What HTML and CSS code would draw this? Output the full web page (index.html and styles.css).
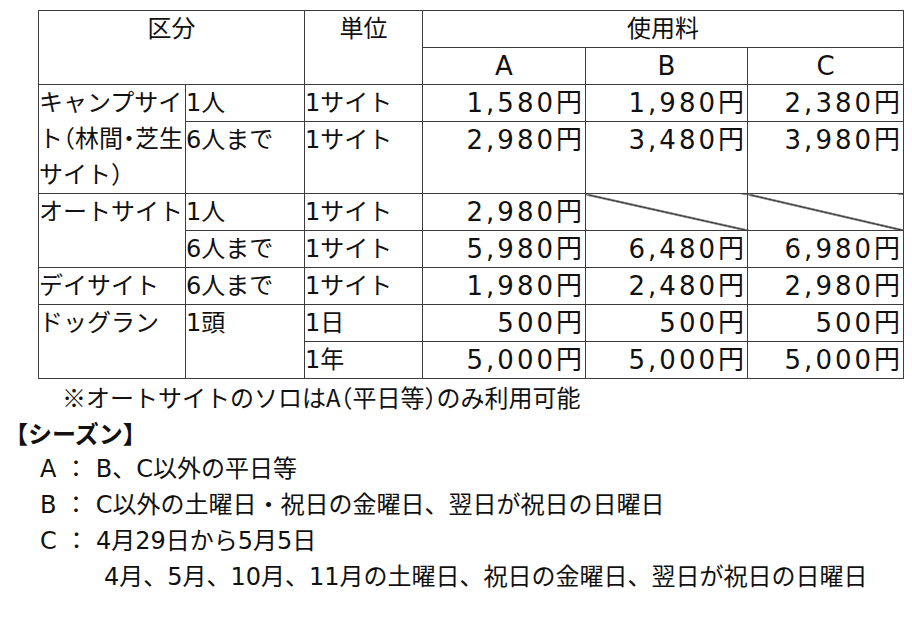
FILE: index.html
```html
<!DOCTYPE html>
<html lang="ja">
<head>
<meta charset="utf-8">
<title>使用料</title>
<link rel="stylesheet" href="styles.css">
</head>
<body>
<div class="page">
  <table class="fees">
    <colgroup>
      <col class="c1"><col class="c2"><col class="c3"><col class="c4"><col class="c5"><col class="c6">
    </colgroup>
    <thead>
      <tr><th colspan="2" rowspan="2">区分</th><th rowspan="2">単位</th><th colspan="3">使用料</th></tr>
      <tr><th class="lat">A</th><th class="lat">B</th><th class="lat">C</th></tr>
    </thead>
    <tbody>
      <tr class="short"><td rowspan="2">キャンプサイト（林間・芝生サイト）</td><td>1人</td><td>1サイト</td><td class="price">1,580円</td><td class="price">1,980円</td><td class="price">2,380円</td></tr>
      <tr class="tall"><td>6人まで</td><td>1サイト</td><td class="price">2,980円</td><td class="price">3,480円</td><td class="price">3,980円</td></tr>
      <tr><td rowspan="2">オートサイト</td><td>1人</td><td>1サイト</td><td class="price">2,980円</td><td class="na"></td><td class="na"></td></tr>
      <tr><td>6人まで</td><td>1サイト</td><td class="price">5,980円</td><td class="price">6,480円</td><td class="price">6,980円</td></tr>
      <tr><td>デイサイト</td><td>6人まで</td><td>1サイト</td><td class="price">1,980円</td><td class="price">2,480円</td><td class="price">2,980円</td></tr>
      <tr><td rowspan="2">ドッグラン</td><td rowspan="2">1頭</td><td>1日</td><td class="price">500円</td><td class="price">500円</td><td class="price">500円</td></tr>
      <tr><td>1年</td><td class="price">5,000円</td><td class="price">5,000円</td><td class="price">5,000円</td></tr>
    </tbody>
  </table>
  <p class="note">※オートサイトのソロはA（平日等）のみ利用可能</p>
  <p class="season-title">【シーズン】</p>
  <div class="seasons">
    <p class="line">A ： B、C以外の平日等</p>
    <p class="line">B ： C以外の土曜日・祝日の金曜日、翌日が祝日の日曜日</p>
    <p class="line">C ： 4月29日から5月5日</p>
    <p class="line cont">4月、5月、10月、11月の土曜日、祝日の金曜日、翌日が祝日の日曜日</p>
  </div>
</div>
</body>
</html>
```
FILE: styles.css
```css
body {
  margin: 0;
  background: #ffffff;
  color: #111111;
  font-family: "DejaVu Sans", "Noto Sans CJK JP", sans-serif;
  font-size: 24px;
}

.page {
  padding-top: 10px;
}

.fees {
  margin-left: 38px;
  border-collapse: collapse;
  table-layout: fixed;
  width: 865px;
  font-feature-settings: "halt";
}

.c1 { width: 147px; }
.c2 { width: 119px; }
.c3 { width: 118px; }
.c4 { width: 163px; }
.c5 { width: 162px; }
.c6 { width: 156px; }

.fees th,
.fees td {
  border: 1px solid #3c3c3c;
  padding: 0;
  line-height: 36px;
  vertical-align: top;
  text-align: left;
  font-weight: normal;
}

.fees tr.short {
  height: 37px;
}

.fees tr.tall {
  height: 72px;
}

.fees th {
  text-align: center;
}

.fees .lat {
  font-size: 26px;
}

.fees .price {
  text-align: right;
  font-size: 26px;
  letter-spacing: 3px;
}

.fees .na {
  background: linear-gradient(to top right,
    transparent calc(50% - 1.1px),
    #000000 calc(50% - 0.3px),
    #000000 calc(50% + 0.3px),
    transparent calc(50% + 1.1px));
}

.note {
  margin: 0;
  padding-left: 62px;
  line-height: 36px;
  font-family: "Noto Sans CJK JP", sans-serif;
  font-feature-settings: "halt";
}

.season-title {
  margin: 0;
  padding-left: 4px;
  line-height: 36px;
  font-weight: bold;
  font-family: "Noto Sans CJK JP", sans-serif;
}

.seasons {
  display: flex;
  flex-direction: column;
}

.line {
  margin: 0;
  padding-left: 40px;
  line-height: 36px;
}

.line.cont {
  padding-left: 104px;
}
```
